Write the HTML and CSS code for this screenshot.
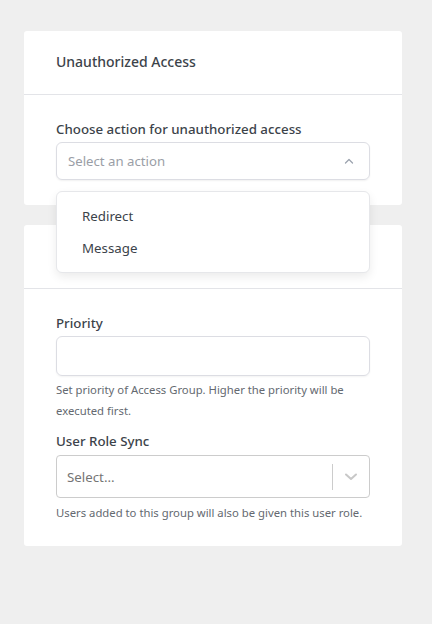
FILE: index.html
```html
<!DOCTYPE html>
<html>
<head>
<meta charset="utf-8">
<link rel="stylesheet" href="styles.css">
</head>
<body>
<div class="page">
  <section class="card card-top">
    <header class="card-head"><h2 class="card-title">Unauthorized Access</h2></header>
    <div class="card-body">
      <div class="field">
        <label class="label">Choose action for unauthorized access</label>
        <div class="select-wrap">
          <div class="select select-open">
            <span class="placeholder">Select an action</span>
            <svg class="chev-up" width="10" height="6" viewBox="0 0 10 6"><path d="M1.5 5 L5 1.5 L8.5 5" fill="none" stroke="#9ca3af" stroke-width="1.3" stroke-linecap="round" stroke-linejoin="round"/></svg>
          </div>
          <ul class="menu">
            <li class="menu-item">Redirect</li>
            <li class="menu-item">Message</li>
          </ul>
        </div>
      </div>
    </div>
  </section>

  <section class="card card-bottom">
    <header class="card-head"></header>
    <div class="card-body">
      <div class="field">
        <label class="label">Priority</label>
        <div class="input"></div>
        <p class="help">Set priority of Access Group. Higher the priority will be executed first.</p>
      </div>
      <div class="field">
        <label class="label label-gap">User Role Sync</label>
        <div class="rselect">
          <span class="rplaceholder">Select...</span>
          <span class="rsep"></span>
          <span class="rind">
            <svg width="14" height="8" viewBox="0 0 14 8"><path d="M2 1.5 L7 6 L12 1.5" fill="none" stroke="#c8c8c8" stroke-width="2" stroke-linecap="round" stroke-linejoin="round"/></svg>
          </span>
        </div>
        <p class="help help-role">Users added to this group will also be given this user role.</p>
      </div>
    </div>
  </section>
</div>
</body>
</html>
```

FILE: styles.css
```css
* { box-sizing: border-box; }
html, body { margin: 0; padding: 0; }
body {
  background: #efefef;
  font-family: "Noto Sans", "Open Sans", sans-serif;
  color: #3c434a;
  width: 432px;
  height: 624px;
}
.page {
  padding: 31px 30px 0 24px;
  display: flex;
  flex-direction: column;
  gap: 20px;
}
.card {
  background: #fff;
  border-radius: 3px;
  position: relative;
}
.card-top { z-index: 2; }
.card-head {
  height: 64px;
  border-bottom: 1px solid #e3e4e8;
  padding: 0 32px;
  display: flex;
  align-items: center;
}
.card-title {
  margin: 0;
  font-size: 14px;
  font-weight: 500;
  color: #3c434a;
  position: relative;
  top: -1px;
}
.card-body {
  padding: 24px 32px 25px;
  display: flex;
  flex-direction: column;
  gap: 10px;
}
.card-bottom .card-body { padding-bottom: 23px; }
.field { display: flex; flex-direction: column; }
.label {
  font-size: 13.3px;
  font-weight: 500;
  color: #3c434a;
  line-height: 20px;
  margin-bottom: 3px;
}
.label-gap { margin-bottom: 4px; }
.select-wrap { position: relative; }
.select {
  height: 38px;
  border: 1px solid #dcdde3;
  border-radius: 6px;
  box-shadow: 0 1px 2px rgba(0,0,0,0.06);
  display: flex;
  align-items: center;
  justify-content: space-between;
  padding: 0 15px 0 11px;
}
.placeholder { font-size: 13.2px; color: #9a9ea6; }
.menu {
  position: absolute;
  left: 0; right: 0;
  top: 49px;
  margin: 0;
  padding: 8px 0 8px;
  list-style: none;
  background: #fff;
  border: 1px solid #e6e7ea;
  border-radius: 6px;
  box-shadow: 0 4px 10px rgba(0,0,0,0.08);
}
.menu-item {
  height: 32px;
  line-height: 32px;
  padding-left: 25px;
  font-size: 13.3px;
  color: #3c434a;
}
.input {
  height: 40px;
  border: 1px solid #dcdde3;
  border-radius: 6px;
  box-shadow: 0 1px 2px rgba(0,0,0,0.05);
}
.help {
  margin: 3px 0 0;
  font-size: 11.3px;
  line-height: 21px;
  color: #646970;
}
.help-role { margin-top: 4px; }
.rselect {
  height: 43px;
  border: 1px solid #cccccc;
  border-radius: 4px;
  display: flex;
  align-items: center;
  padding-left: 10px;
}
.rplaceholder { flex: 1; font-size: 13.3px; color: #757575; }
.rsep { width: 1px; height: 26px; background: #cccccc; }
.rind { width: 36px; display: flex; justify-content: center; align-items: center; }
```
